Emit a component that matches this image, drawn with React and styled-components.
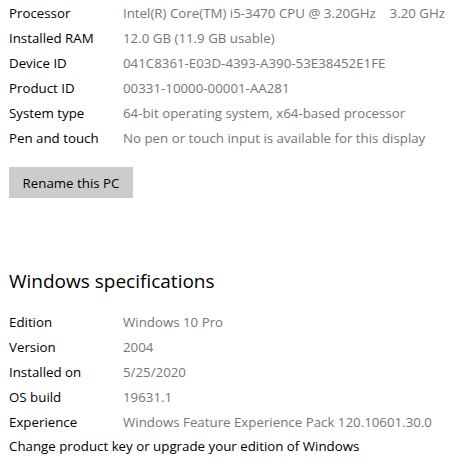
import React from 'react'
import styled, { createGlobalStyle } from 'styled-components'

const GlobalStyle = createGlobalStyle`
  body {
    margin: 0;
    background: #ffffff;
    font-family: 'Open Sans', 'Noto Sans', sans-serif;
  }
`

const StyledPage = styled.div`
  padding: 0 9px;
  width: 462px;
  height: 467px;
  box-sizing: border-box;
  overflow: hidden;
`

const StyledSpecList = styled.div`
  display: grid;
  grid-template-columns: 114px 1fr;
  grid-auto-rows: 25px;
  align-items: center;
`

const StyledLabel = styled.div`
  color: #000000;
  font-size: 13.3px;
  white-space: nowrap;
`

const StyledValue = styled.div`
  color: #767676;
  font-size: 13.3px;
  white-space: pre;
`

const StyledButton = styled.button`
  margin-top: 17px;
  width: 124px;
  height: 31px;
  border: none;
  background-color: #cccccc;
  color: #000000;
  font-family: inherit;
  font-size: 13.3px;
  padding: 0;
`

const StyledHeading = styled.h2`
  margin: 69px 0 14px;
  font-size: 19px;
  font-weight: 400;
  line-height: 28px;
  color: #000000;
`

const StyledLink = styled.div`
  color: #000000;
  font-size: 13.3px;
  line-height: 25px;
`

const deviceSpecs = [
  ['Processor', 'Intel(R) Core(TM) i5-3470 CPU @ 3.20GHz    3.20 GHz'],
  ['Installed RAM', '12.0 GB (11.9 GB usable)'],
  ['Device ID', '041C8361-E03D-4393-A390-53E38452E1FE'],
  ['Product ID', '00331-10000-00001-AA281'],
  ['System type', '64-bit operating system, x64-based processor'],
  ['Pen and touch', 'No pen or touch input is available for this display'],
]

const windowsSpecs = [
  ['Edition', 'Windows 10 Pro'],
  ['Version', '2004'],
  ['Installed on', '5/25/2020'],
  ['OS build', '19631.1'],
  ['Experience', 'Windows Feature Experience Pack 120.10601.30.0'],
]

const SpecList = ({ items }) => (
  <StyledSpecList>
    {items.map(([label, value]) => (
      <React.Fragment key={label}>
        <StyledLabel>{label}</StyledLabel>
        <StyledValue>{value}</StyledValue>
      </React.Fragment>
    ))}
  </StyledSpecList>
)

const App = () => (
  <StyledPage>
    <GlobalStyle />
    <SpecList items={deviceSpecs} />
    <StyledButton>Rename this PC</StyledButton>
    <StyledHeading>Windows specifications</StyledHeading>
    <SpecList items={windowsSpecs} />
    <StyledLink>Change product key or upgrade your edition of Windows</StyledLink>
  </StyledPage>
)

export default App
